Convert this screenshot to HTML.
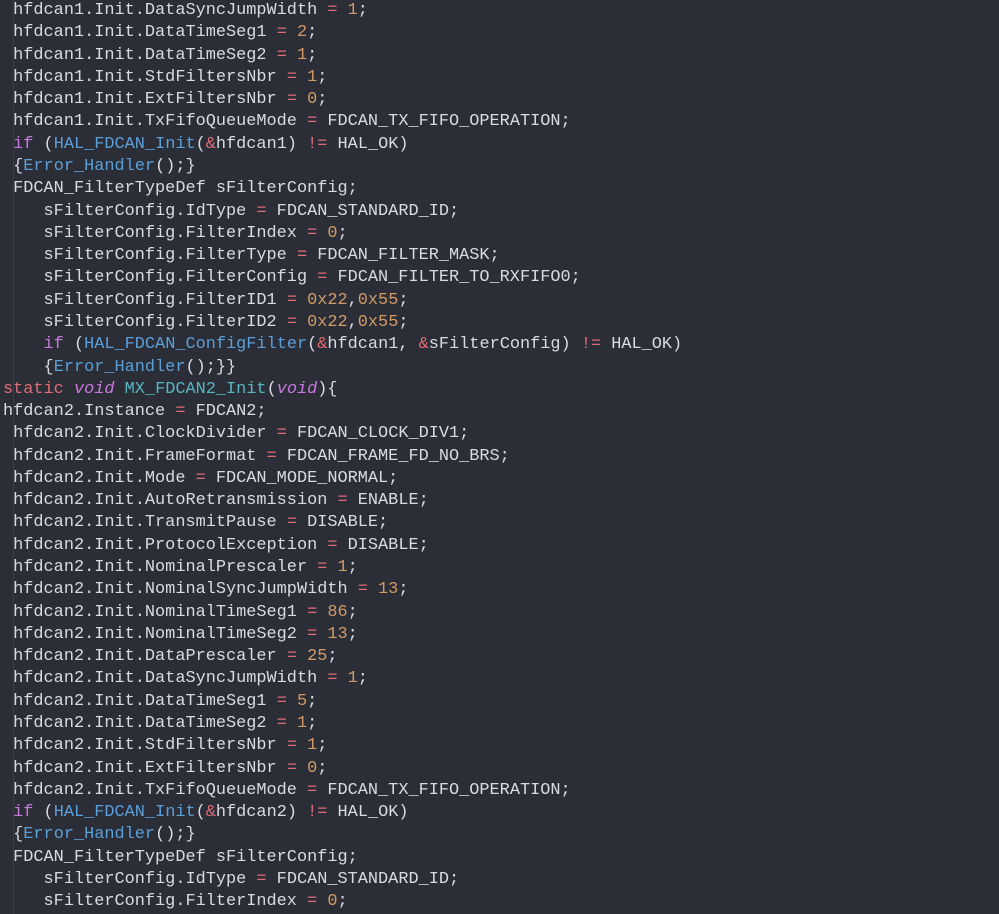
<!DOCTYPE html><html><head><meta charset="utf-8"><style>
body{margin:0;background:#2b2e37;width:999px;height:914px;overflow:hidden}
pre{margin:0;position:absolute;left:3px;top:0px;font-family:"Liberation Mono",monospace;font-size:16.9px;line-height:22.28px;color:#d8dbe2;white-space:pre}
.g{position:absolute;left:13px;top:0;width:1px;height:914px;background:#3a3d47}
.n{color:#d19a66}.o{color:#e06c75}.k{color:#c678dd}.f{color:#5b9fd8}.t{color:#56b6c2}.i{color:#c678dd;font-style:italic}
</style></head><body><div class="g"></div><pre> hfdcan1.Init.DataSyncJumpWidth <span class="o">=</span> <span class="n">1</span>;
 hfdcan1.Init.DataTimeSeg1 <span class="o">=</span> <span class="n">2</span>;
 hfdcan1.Init.DataTimeSeg2 <span class="o">=</span> <span class="n">1</span>;
 hfdcan1.Init.StdFiltersNbr <span class="o">=</span> <span class="n">1</span>;
 hfdcan1.Init.ExtFiltersNbr <span class="o">=</span> <span class="n">0</span>;
 hfdcan1.Init.TxFifoQueueMode <span class="o">=</span> FDCAN_TX_FIFO_OPERATION;
 <span class="k">if</span> (<span class="f">HAL_FDCAN_Init</span>(<span class="o">&amp;</span>hfdcan1) <span class="o">!=</span> HAL_OK)
 {<span class="f">Error_Handler</span>();}
 FDCAN_FilterTypeDef sFilterConfig;
    sFilterConfig.IdType <span class="o">=</span> FDCAN_STANDARD_ID;
    sFilterConfig.FilterIndex <span class="o">=</span> <span class="n">0</span>;
    sFilterConfig.FilterType <span class="o">=</span> FDCAN_FILTER_MASK;
    sFilterConfig.FilterConfig <span class="o">=</span> FDCAN_FILTER_TO_RXFIFO0;
    sFilterConfig.FilterID1 <span class="o">=</span> <span class="n">0x22</span>,<span class="n">0x55</span>;
    sFilterConfig.FilterID2 <span class="o">=</span> <span class="n">0x22</span>,<span class="n">0x55</span>;
    <span class="k">if</span> (<span class="f">HAL_FDCAN_ConfigFilter</span>(<span class="o">&amp;</span>hfdcan1, <span class="o">&amp;</span>sFilterConfig) <span class="o">!=</span> HAL_OK)
    {<span class="f">Error_Handler</span>();}}
<span class="o">static</span> <span class="i">void</span> <span class="t">MX_FDCAN2_Init</span>(<span class="i">void</span>){
hfdcan2.Instance <span class="o">=</span> FDCAN2;
 hfdcan2.Init.ClockDivider <span class="o">=</span> FDCAN_CLOCK_DIV1;
 hfdcan2.Init.FrameFormat <span class="o">=</span> FDCAN_FRAME_FD_NO_BRS;
 hfdcan2.Init.Mode <span class="o">=</span> FDCAN_MODE_NORMAL;
 hfdcan2.Init.AutoRetransmission <span class="o">=</span> ENABLE;
 hfdcan2.Init.TransmitPause <span class="o">=</span> DISABLE;
 hfdcan2.Init.ProtocolException <span class="o">=</span> DISABLE;
 hfdcan2.Init.NominalPrescaler <span class="o">=</span> <span class="n">1</span>;
 hfdcan2.Init.NominalSyncJumpWidth <span class="o">=</span> <span class="n">13</span>;
 hfdcan2.Init.NominalTimeSeg1 <span class="o">=</span> <span class="n">86</span>;
 hfdcan2.Init.NominalTimeSeg2 <span class="o">=</span> <span class="n">13</span>;
 hfdcan2.Init.DataPrescaler <span class="o">=</span> <span class="n">25</span>;
 hfdcan2.Init.DataSyncJumpWidth <span class="o">=</span> <span class="n">1</span>;
 hfdcan2.Init.DataTimeSeg1 <span class="o">=</span> <span class="n">5</span>;
 hfdcan2.Init.DataTimeSeg2 <span class="o">=</span> <span class="n">1</span>;
 hfdcan2.Init.StdFiltersNbr <span class="o">=</span> <span class="n">1</span>;
 hfdcan2.Init.ExtFiltersNbr <span class="o">=</span> <span class="n">0</span>;
 hfdcan2.Init.TxFifoQueueMode <span class="o">=</span> FDCAN_TX_FIFO_OPERATION;
 <span class="k">if</span> (<span class="f">HAL_FDCAN_Init</span>(<span class="o">&amp;</span>hfdcan2) <span class="o">!=</span> HAL_OK)
 {<span class="f">Error_Handler</span>();}
 FDCAN_FilterTypeDef sFilterConfig;
    sFilterConfig.IdType <span class="o">=</span> FDCAN_STANDARD_ID;
    sFilterConfig.FilterIndex <span class="o">=</span> <span class="n">0</span>;
</pre></body></html>
